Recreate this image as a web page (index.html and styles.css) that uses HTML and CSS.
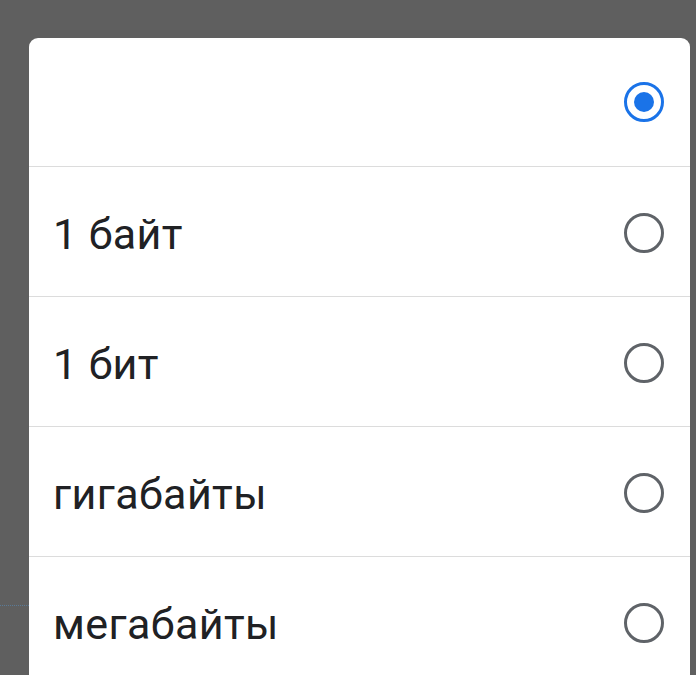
FILE: index.html
```html
<!DOCTYPE html>
<html lang="ru">
<head>
  <meta charset="UTF-8" />
  <meta name="viewport" content="width=device-width, initial-scale=1" />
  <title>Выбор</title>
  <link rel="stylesheet" href="styles.css">
</head>
<body>
  <div class="backdrop">
    <div class="dots"></div>
    <div class="dialog">
      <label class="option option-first">
        <span class="option-text"></span>
        <span class="radio radio-on"></span>
      </label>
      <label class="option">
        <span class="option-text">1 байт</span>
        <span class="radio"></span>
      </label>
      <label class="option">
        <span class="option-text">1 бит</span>
        <span class="radio"></span>
      </label>
      <label class="option">
        <span class="option-text">гигабайты</span>
        <span class="radio"></span>
      </label>
      <label class="option">
        <span class="option-text">мегабайты</span>
        <span class="radio"></span>
      </label>
    </div>
  </div>
</body>
</html>
```
FILE: styles.css
```css
html, body {
  margin: 0; padding: 0; height: 100%;
  background: #5f5f5f;
  font-family: Roboto, "Noto Sans", sans-serif;
  overflow: hidden;
}
.backdrop {
  position: relative;
  height: 100%;
  padding-top: 38px;
  box-sizing: border-box;
}
.dots {
  position: absolute;
  left: 0; top: 605px;
  width: 29px;
  border-top: 1px dotted #5a7a96;
}
.dialog {
  margin-left: 29px;
  width: 661px;
  background: #fff;
  border-radius: 9px 9px 0 0;
  overflow: hidden;
}
.option {
  display: flex;
  align-items: center;
  justify-content: space-between;
  height: 129px;
  padding: 0 26px 0 24px;
  border-top: 1px solid #dcdcdc;
  box-sizing: content-box;
}
.option-first {
  height: 128px;
  border-top: none;
}
.option-text {
  font-size: 43px;
  color: #202124;
  letter-spacing: 0.4px;
  margin-top: 4px;
}
.radio {
  width: 34px; height: 34px;
  border: 3.5px solid #5f6368;
  border-radius: 50%;
  position: relative;
  margin-top: 3px;
}
.option-first .radio { margin-top: 0; }
.radio-on {
  border-color: #1a73e8;
}
.radio-on::after {
  content: "";
  position: absolute;
  left: 7px; top: 7px;
  width: 20px; height: 20px;
  border-radius: 50%;
  background: #1a73e8;
}
```
